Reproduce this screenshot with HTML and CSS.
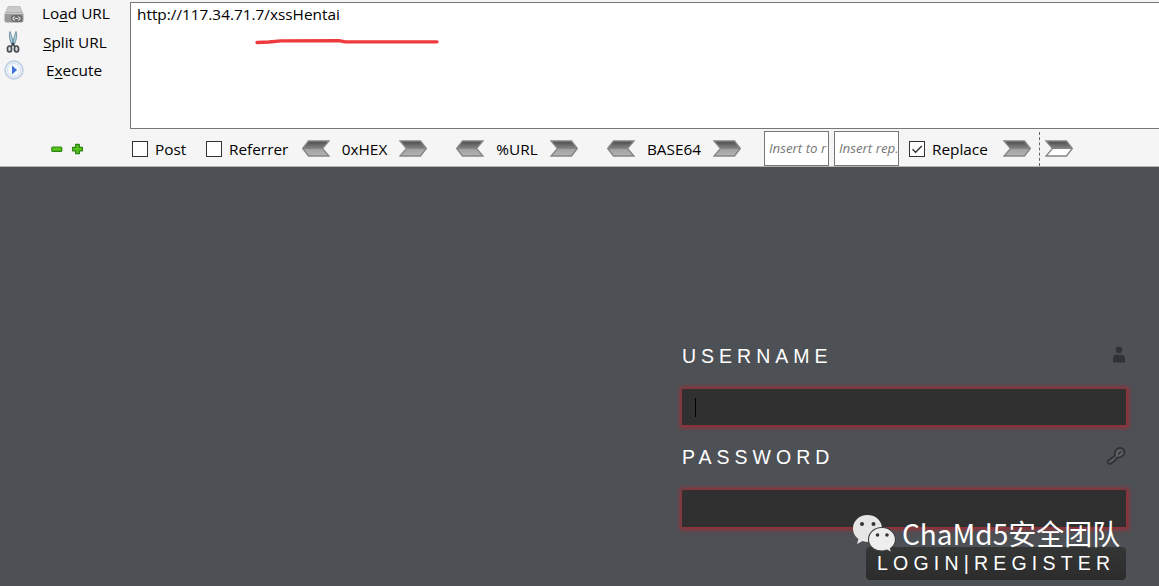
FILE: index.html
```
<!DOCTYPE html>
<html lang="zh">
<head>
<meta charset="utf-8">
<title>Login</title>
<link rel="stylesheet" href="styles.css">
</head>
<body>
<svg class="defs" width="0" height="0">
  <defs>
    <linearGradient id="steel" x1="0" y1="0" x2="0" y2="1">
      <stop offset="0" stop-color="#4a4a4a"/><stop offset=".5" stop-color="#858585"/>
      <stop offset=".56" stop-color="#a2a2a2"/><stop offset="1" stop-color="#b4b4b4"/>
    </linearGradient>
    <linearGradient id="half" x1="0" y1="0" x2="0" y2="1">
      <stop offset="0" stop-color="#4a4a4a"/><stop offset=".5" stop-color="#858585"/>
      <stop offset=".5" stop-color="#fff"/><stop offset="1" stop-color="#fff"/>
    </linearGradient>
    <symbol id="right" viewBox="0 0 28 17">
      <path d="M1 1H21.500L27.300 8.500L21.500 16H1L7.500 8.500Z" fill="url(#steel)" stroke="#858585" stroke-width="1.300"/>
    </symbol>
    <symbol id="left" viewBox="0 0 28 17">
      <path d="M27 1H6.500L.7 8.500L6.500 16H27L20.500 8.500Z" fill="url(#steel)" stroke="#858585" stroke-width="1.300"/>
    </symbol>
  </defs>
</svg>
<header class="toolbar">
  <div class="top">
    <nav class="actions">
      <div class="action">
        <svg width="20" height="20" viewBox="0 0 20 20"><path d="M4 2.500H16L19 10H1Z" fill="#c9c9c9" stroke="#aaa" stroke-width=".6"/><rect x=".5" y="8.500" width="19" height="10" rx="2" fill="#999"/><path d="M1 9.500H19" stroke="#ccc"/><rect x="7" y="11" width="11.500" height="7" rx="3" fill="#6d6d6d"/><path d="M11 13H10a1.600 1.600 0 0 0 0 3h1M14 13h1a1.600 1.600 0 0 1 0 3h-1M11 14.500h3" fill="none" stroke="#e4e4e4" stroke-width="1.100"/></svg>
        <span class="load">Lo<u>a</u>d URL</span>
      </div>
      <div class="action">
        <svg width="20" height="24" viewBox="0 0 20 24"><path d="M7 1.500Q5 7 9 15L11 14ZM13 1.500Q15 7 11 15L9 14Z" fill="#a9d0de" stroke="#6a8b9a" stroke-width=".9"/><g fill="#ddd" stroke="#454d54" stroke-width="1.700"><ellipse cx="6.500" cy="19" rx="2.100" ry="3"/><ellipse cx="13.500" cy="19" rx="2.100" ry="3"/></g><path d="M8 17L11 13M12 17L9 13" stroke="#454d54" stroke-width="1.500"/></svg>
        <span class="split"><u>S</u>plit URL</span>
      </div>
      <div class="action">
        <svg width="20" height="20" viewBox="0 0 20 20"><circle cx="10" cy="10" r="9" fill="#e8eef7" stroke="#bccbe2" stroke-width="1.400"/><circle cx="10" cy="10" r="6.500" fill="#f5f9fe" stroke="#d5e0f0"/><path d="M8 5.500L13 10L8 14.500Z" fill="#3c72d8"/></svg>
        <span class="exec">E<u>x</u>ecute</span>
      </div>
    </nav>
    <div class="url"><span>http://117.34.71.7/xssHentai</span>
      <svg class="mark" width="186" height="8" viewBox="0 0 186 8"><path d="M3 5.500L15 5L27 3.800L85 3.600L91 4.800H183" fill="none" stroke="#ee3a3c" stroke-width="3.300" stroke-linecap="round" stroke-linejoin="round"/></svg>
    </div>
  </div>
  <div class="tools">
    <svg class="pm" width="33" height="12" viewBox="0 0 33 12"><rect x=".8" y="4" width="10" height="4.400" rx="1" fill="#55c51c" stroke="#2f8512" stroke-width="1.200"/><path d="M24.700 1.500h3.600v2.900h3.100v3.400h-3.100v2.900h-3.600V7.800h-3.100V4.400h3.100Z" fill="#55c51c" stroke="#2f8512" stroke-width="1.300" stroke-linejoin="round"/></svg>
    <i class="box"></i><span class="t post">Post</span>
    <i class="box"></i><span class="t ref">Referrer</span>
    <div class="codec hex"><svg><use href="#left"/></svg><span class="t">0xHEX</span><svg><use href="#right"/></svg></div>
    <div class="codec pct"><svg><use href="#left"/></svg><span class="t">%URL</span><svg><use href="#right"/></svg></div>
    <div class="codec b64"><svg><use href="#left"/></svg><span class="t">BASE64</span><svg><use href="#right"/></svg></div>
    <div class="field">Insert to r</div>
    <div class="field">Insert rep.</div>
    <i class="box checked"><svg width="14" height="14" viewBox="0 0 14 14"><path d="M2.500 7.200L5.600 10.300L11.800 4" fill="none" stroke="#333" stroke-width="1.400"/></svg></i><span class="t rep">Replace</span>
    <svg class="arrow"><use href="#right"/></svg>
    <i class="dash"></i>
    <svg class="arrow" viewBox="0 0 28 17"><path d="M1 1H21.500L27.300 8.500L21.500 16H1L7.500 8.500Z" fill="url(#half)" stroke="#858585" stroke-width="1.300"/></svg>
  </div>
</header>
<main class="page">
  <form class="login">
    <div class="label"><span>USERNAME</span><svg width="14" height="18" viewBox="0 0 14 18"><circle cx="7" cy="4" r="3.200" fill="#303236"/><path d="M1 16.500V13Q1 9 4.500 8.500Q7 10 9.500 8.500Q13 9 13 13V16.500Z" fill="#303236"/></svg></div>
    <div class="input"><i class="caret"></i></div>
    <div class="label second"><span>PASSWORD</span><svg width="20" height="18" viewBox="0 0 20 18"><path d="M9 8.500Q8 4 11 2Q14 0 17 2Q20 5 17 8.500Q15 11 11.500 10.500L8 14.500L5 16.500Q1 17.500 2 14Z" fill="#5d5f61" stroke="#303236" stroke-width="1.900" stroke-linejoin="round"/><path d="M12.500 7L15 4.500" stroke="#303236" stroke-width="1.500" stroke-linecap="round"/></svg></div>
    <div class="input pass"></div>
    <div class="button">LOGIN|REGISTER</div>
  </form>
  <div class="watermark">
    <svg width="44" height="39" viewBox="0 0 44 39"><path d="M15.500 1C7 1 1 7 1 14.500C1 19 3 22.500 6.500 25L5 30L10.500 27Q13 28 16 28C24 28 30 22 30 14.500C30 7 24 1 15.500 1Z" fill="#e6e6e6"/><path d="M30 13.500C22 13.500 16.500 19 16.500 25.500C16.500 32 22 37 30 37Q32.500 37 35 36L39.500 38.500L38.500 34.500C41.500 32.500 43.500 29 43.500 25.500C43.500 19 37.500 13.500 30 13.500Z" fill="#eee" stroke="#3b3b3c" stroke-width="1.100"/><g fill="#333"><circle cx="10" cy="10" r="2"/><circle cx="21.500" cy="10" r="2"/><circle cx="25.500" cy="21" r="1.800"/><circle cx="35" cy="21" r="1.800"/></g></svg>
    <span>ChaMd5安全团队</span>
  </div>
</main>
</body>
</html>
```
FILE: styles.css
```
* { box-sizing: border-box; }
body { margin: 0; width: 1159px; height: 586px; overflow: hidden; background: #4d5055; font-family: "Open Sans", "Noto Sans", sans-serif; font-size: 15.35px; color: #000; }
svg { display: block; flex: none; }
.defs { position: absolute; }
.toolbar { height: 167px; background: #f5f5f5; border-bottom: 1px solid #b5b5b5; }
.top { display: flex; height: 129px; padding-top: 2px; }
.actions { width: 130px; padding-left: 4px; }
.action { display: flex; align-items: center; height: 28px; white-space: nowrap; line-height: 20px; }
.action:first-child { height: 24px; }
.action:first-child span { padding-bottom: 2px; }
.action:nth-child(2) { height: 32px; }
.action:nth-child(2) svg { margin-left: -1px; margin-right: 1px; }
.action:nth-child(3) { height: 24px; }
.action u { text-underline-offset: 2px; text-decoration-thickness: 1px; }
.load { margin-left: 18px; }
.split { margin-left: 19px; }
.exec { margin-left: 22px; }
.url { flex: 1; background: #fff; border: 1px solid #777; border-right: 0; padding: 1px 0 0 6px; line-height: 20px; }
.url span { display: block; }
.mark { margin: 13px 0 0 117px; }
.tools { display: flex; align-items: center; height: 37px; padding: 2px 0 0 51px; white-space: nowrap; }
.box { flex: none; width: 16px; height: 16px; border: 1px solid #333; background: #fff; margin-left: 48px; }
.t { flex: none; line-height: 20px; }
.post, .ref { margin-left: 7px; }
.post { width: 32px; }
.post + .box { margin-left: 19px; }
.ref { width: 57px; }
.codec { display: flex; align-items: center; justify-content: space-between; flex: none; }
.codec svg, .arrow { width: 28px; height: 17px; }
.hex { width: 125px; margin-left: 16px; }
.pct { width: 122px; margin-left: 29px; }
.b64 { width: 134px; margin-left: 29px; margin-right: 18px; }
.field { flex: none; width: 65px; height: 35px; border: 1px solid #777; background: #fff; margin-left: 5px; padding-left: 4px; line-height: 32px; overflow: hidden; font-size: 13.3px; font-style: italic; color: #777; }
.box.checked { margin-left: 10px; }
.rep { width: 56px; margin: 0 15px 0 7px; }
.dash { width: 1px; height: 34px; margin: 0 5px 0 8px; border-left: 1px dashed #666; }
.page { position: relative; height: 419px; }
.login { margin-left: 682px; width: 444px; padding-top: 176px; font-family: "Liberation Sans", Arial, sans-serif; font-size: 19.5px; color: #fff; }
.label { display: flex; justify-content: space-between; height: 26px; line-height: 26px; letter-spacing: 5px; }
.label svg { margin-top: 3px; }
.input { height: 36px; margin-top: 20px; padding: 9px 13px; background: #303030; box-shadow: 0 0 4px 2.5px #962f38; }
.caret { display: block; width: 1px; height: 19px; background: #000; }
.second { margin-top: 19px; }
.pass { height: 37px; }
.button { width: 260px; height: 33px; margin: 20px 0 0 184px; padding-left: 11px; border-radius: 4px; background: linear-gradient(#343635, #2c2c2c); line-height: 32px; letter-spacing: 5.2px; white-space: nowrap; }
.watermark { position: absolute; left: 852px; top: 347px; display: flex; color: #fff; font: 28px/38px "Noto Sans CJK SC", sans-serif; white-space: nowrap; }
.watermark span { margin-left: 6px; }
```
